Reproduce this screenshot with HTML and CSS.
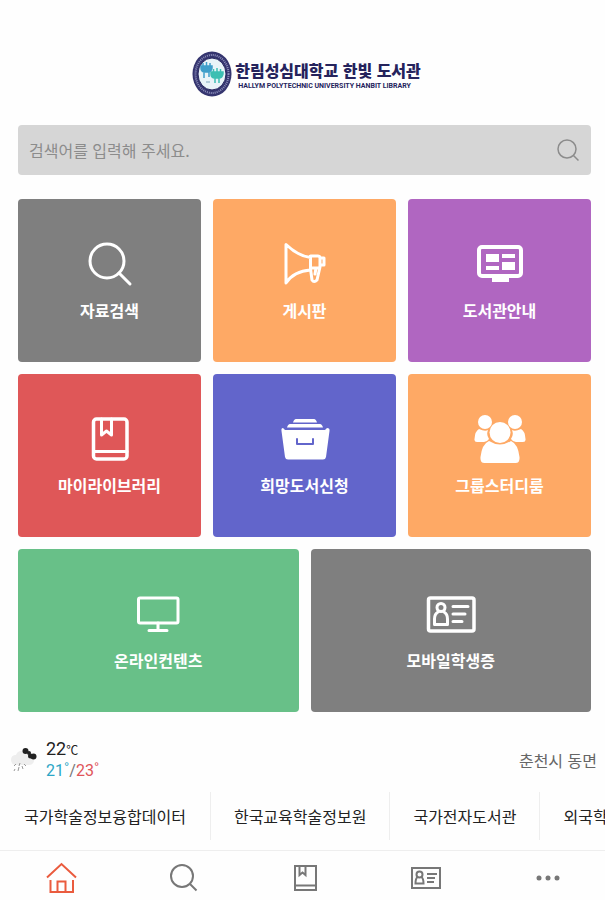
FILE: index.html
```html
<!DOCTYPE html>
<html lang="ko">
<head>
<meta charset="utf-8">
<meta name="viewport" content="width=device-width, initial-scale=1">
<title>한림성심대학교 한빛 도서관</title>
<link rel="stylesheet" href="styles.css">
</head>
<body>
<header class="brand">
  <svg class="emblem" viewBox="0 0 40 46" aria-hidden="true">
    <ellipse cx="20" cy="23" rx="19.5" ry="22.5" fill="#35356f"/>
    <ellipse cx="20" cy="23" rx="16.5" ry="19" fill="none" stroke="#8f91bd" stroke-width="2" stroke-dasharray="1 1"/>
    <ellipse cx="20" cy="23" rx="14" ry="16" fill="#e9f4f8" stroke="#26265f"/>
    <path d="M9 15h11v2q-1 4-4 4h-3q-4 0-4-4zM14.500 11v4M11 12v3M18 12v3M12 21v6M17 21v5" fill="#3f9fca" stroke="#3f9fca" stroke-width="1.500"/>
    <path d="M19 21h12v2q-1 4-4 4h-4q-4 0-4-4zM25 17v4M21.500 18v3M28.500 18v3M23 27v5M27 27v5" fill="#3dbfb2" stroke="#3dbfb2" stroke-width="1.500"/>
    <path d="M14 31h4" stroke="#7fa6bd" stroke-width="1"/>
  </svg>
  <div class="brand-text">
    <h1 class="brand-name">한림성심대학교 한빛 도서관</h1>
    <p class="brand-sub">HALLYM POLYTECHNIC UNIVERSITY HANBIT LIBRARY</p>
  </div>
</header>

<main class="content">
  <form class="search" role="search">
    <input class="search-input" type="text" placeholder="검색어를 입력해 주세요." aria-label="검색어">
    <button class="search-button" type="button" aria-label="검색">
      <svg class="search-icon" viewBox="0 0 24 24"><circle cx="11" cy="11" r="9"/><path d="M17.500 17.500 22.500 22.500"/></svg>
    </button>
  </form>

  <nav class="tiles" aria-label="주요 메뉴">
    <a class="tile gray" href="#">
      <svg class="tile-icon" viewBox="0 0 48 48"><circle cx="21" cy="21" r="17"/><path d="M33 33 44 44"/></svg>
      <span>자료검색</span>
    </a>
    <a class="tile orange" href="#">
      <svg class="tile-icon" viewBox="0 0 48 48"><path d="M5 4.500V43Q13 31 29.500 30V17.500Q17 16 5 4.500zM29.500 16H37Q39 16 39 18V26Q39 28 37 28H30M39 18h4v7h-4M29.500 29l1.500 11q2 3 5 0l3-13M35 28l-1 6"/></svg>
      <span>게시판</span>
    </a>
    <a class="tile purple" href="#">
      <svg class="tile-icon" viewBox="0 0 48 48"><rect x="3" y="7" width="42" height="29" rx="3" stroke-width="4"/><path class="solid" d="M16 38h17v4H16zM10 14h13v8H10zM10 26h13v4H10zM26 14h13v4H26zM26 22h13v8H26z"/></svg>
      <span>도서관안내</span>
    </a>
    <a class="tile red" href="#">
      <svg class="tile-icon" viewBox="0 0 48 48"><rect x="7.500" y="4" width="33.500" height="40" rx="3" stroke-width="3.500"/><path d="M8 36.500h33M15.500 4v16l5-4 5 4V4"/></svg>
      <span>마이라이브러리</span>
    </a>
    <a class="tile blue" href="#">
      <svg class="tile-icon" viewBox="0 0 48 48"><path class="solid" d="M15 4h18q2 0 3 3.500H12q1-3.500 3-3.500zM9 9h30q2 0 3 3.500H6Q7 9 9 9zM2 13l2 2h40l2-2q3 0 2.500 3l-3.500 26q-.5 2.500-3 2.500H7Q4.500 44.500 4 42L.5 16Q0 13 2 13z"/><path class="handle" d="M16 24v5h16v-5"/></svg>
      <span>희망도서신청</span>
    </a>
    <a class="tile orange" href="#">
      <svg class="tile-icon" viewBox="0 0 48 48"><g class="solid"><circle cx="9" cy="7" r="7"/><circle cx="39" cy="7" r="7"/><circle cx="24" cy="17.500" r="10.500"/><path d="M3 14q6 3 9 1-2 5 1 9-2 3-5 3H1q-3 0-2.500-3Q-1 16 3 14zM45 14q-6 3-9 1 2 5-1 9 2 3 5 3h7q3 0 2.500-3Q49 16 45 14zM13 26q11 7 22 0 7 3 8.500 16 .5 6-4 6h-31q-4.500 0-4-6Q6 29 13 26z"/></g></svg>
      <span>그룹스터디룸</span>
    </a>
    <a class="tile wide green" href="#">
      <svg class="tile-icon" viewBox="0 0 48 48"><rect x="4.500" y="8" width="39.500" height="25" rx="1.500"/><path d="M24 33v7M15 40.500h18"/></svg>
      <span>온라인컨텐츠</span>
    </a>
    <a class="tile wide gray" href="#">
      <svg class="tile-icon" viewBox="0 0 48 48"><rect x="1.500" y="8" width="45.500" height="33" rx="2" stroke-width="3.500"/><circle cx="14" cy="17.500" r="4"/><path d="M11 22q-3.500 2-3.500 7v5.500h13V29q0-5-3.500-7M26 16.500h15M26 24h12M26 31.500h9"/></svg>
      <span>모바일학생증</span>
    </a>
  </nav>
</main>

<section class="weather" aria-label="날씨">
  <svg class="weather-icon" viewBox="0 0 28 28" aria-hidden="true">
    <path d="M1 14q0-5 5-5 2-5 8-4 3 1 5 5 5 1 5 5-1 4-5 4H5q-4-1-4-5z" fill="#eee"/>
    <g fill="#222"><circle cx="15.500" cy="5" r="3"/><circle cx="19" cy="7" r="2"/><circle cx="20.500" cy="10" r="2.500"/><circle cx="23.500" cy="10.500" r="3"/></g>
    <path d="M6 18l-2 2M10 17l-1 3M14 18l2 2M5 23l-1 2M9 21l-1 4M12 20l1 3" stroke="#999" stroke-width="1"/>
  </svg>
  <div class="temps">
    <p class="now">22<span class="unit">℃</span></p>
    <p class="range"><span class="low">21˚</span>/<span class="high">23˚</span></p>
  </div>
  <p class="place">춘천시 동면</p>
</section>

<nav class="links" aria-label="관련 사이트">
  <a href="#">국가학술정보융합데이터</a>
  <a href="#">한국교육학술정보원</a>
  <a href="#">국가전자도서관</a>
  <a href="#">외국학</a>
</nav>

<nav class="tabbar" aria-label="하단 메뉴">
  <a class="tab active" href="#" aria-label="홈"><svg viewBox="0 0 32 32"><path d="M2 15.500 16.500 2 31 15.500M5.500 18v12H28V18M12.500 30V19.500h8V30"/></svg></a>
  <a class="tab" href="#" aria-label="검색"><svg viewBox="0 0 32 32"><circle cx="15" cy="14" r="11"/><path d="M23 22l6.500 6.500"/></svg></a>
  <a class="tab" href="#" aria-label="도서"><svg viewBox="0 0 32 32"><path d="M6 4h21v24H6zM6 23.500h21M10.500 4v9l3-2.500 3 2.500V4"/></svg></a>
  <a class="tab" href="#" aria-label="학생증"><svg viewBox="0 0 32 32"><path d="M2 6h28v20H2zM17 12h10M17 16h8M17 20h7M7.500 15q-2 1.500-2 6.500h8q0-5-2-6.500"/><circle cx="9.500" cy="12.500" r="3"/></svg></a>
  <a class="tab" href="#" aria-label="더보기"><svg viewBox="0 0 32 32"><g class="dots"><circle cx="7" cy="16" r="2.500"/><circle cx="16" cy="16" r="2.500"/><circle cx="25" cy="16" r="2.500"/></g></svg></a>
</nav>
</body>
</html>
```
FILE: styles.css
```css
* {
  box-sizing: border-box;
}

body {
  margin: 0;
  min-height: 100vh;
  display: flex;
  flex-direction: column;
  overflow-x: hidden;
  background: #fefefe;
  color: #222;
  font: 16px/24px "Noto Sans CJK KR", "Noto Sans", sans-serif;
}

h1,
p {
  margin: 0;
}

a {
  color: inherit;
  text-decoration: none;
}

svg {
  display: block;
  overflow: visible;
}

.brand {
  display: flex;
  justify-content: center;
  align-items: center;
  gap: 3px;
  padding: 51px 0 28px 8px;
}

.emblem {
  width: 40px;
  height: 46px;
}

.brand-text {
  color: #25235c;
}

.brand-name {
  font-size: 16px;
  line-height: 24px;
  font-weight: 900;
}

.brand-sub {
  font: 700 7px/8px Roboto, "Liberation Sans", sans-serif;
  padding-left: 3px;
}

.content {
  padding: 0 14px 0 18px;
}

.search {
  display: flex;
  align-items: center;
  height: 50px;
  margin-bottom: 24px;
  padding: 0 11px;
  border-radius: 4px;
  background: #d6d6d6;
}

.search-input {
  flex: 1;
  min-width: 0;
  padding: 0;
  border: 0;
  outline: 0;
  background: none;
  font: inherit;
  color: #555;
}

.search-input::placeholder {
  color: #8c8c8c;
  opacity: 1;
}

.search-button {
  padding: 0;
  border: 0;
  background: none;
}

.search-icon {
  width: 24px;
  height: 24px;
  fill: none;
  stroke: #8c8c8c;
  stroke-width: 1.5;
}

.tiles {
  display: grid;
  grid-template-columns: repeat(6, 1fr);
  grid-auto-rows: 163px;
  gap: 12px;
}

.tile {
  grid-column: span 2;
  display: flex;
  flex-direction: column;
  align-items: center;
  justify-content: center;
  gap: 10px;
  border-radius: 4px;
  color: #fff;
  font-weight: 700;
}

.wide {
  grid-column: span 3;
}

.gray { background: #7f7f7f; }
.orange { background: #fea965; }
.purple { background: #b066c1; }
.red { background: #df5758; }
.blue { background: #6265cb; }
.green { background: #68c088; }

.tile-icon {
  width: 48px;
  height: 48px;
  fill: none;
  stroke: #fff;
  stroke-width: 3;
  stroke-linecap: round;
  stroke-linejoin: round;
}

.solid {
  fill: #fff;
  stroke: none;
}

.handle {
  stroke: #6265cb;
  stroke-width: 2;
}

.weather {
  display: flex;
  align-items: center;
  gap: 8px;
  padding: 26px 8px 10px 10px;
}

.weather-icon {
  width: 28px;
  height: 28px;
}

.temps {
  font-family: Roboto, "Noto Sans CJK KR", sans-serif;
}

.now {
  font-size: 18px;
  line-height: 22px;
}

.unit {
  font-size: 12px;
  line-height: 12px;
}

.range {
  line-height: 22px;
  color: #777;
}

.low { color: #2ba6c6; }
.high { color: #e0555a; }

.place {
  margin-left: auto;
  color: #666;
}

.links {
  display: flex;
  overflow: hidden;
  white-space: nowrap;
}

.links a {
  flex: none;
  padding: 12px 24px;
}

.links a + a {
  padding: 12px 23px;
  border-left: 1px solid #eee;
}

.tabbar {
  display: flex;
  justify-content: space-between;
  align-items: center;
  height: 50px;
  margin-top: auto;
  padding: 4px 41px 0 45px;
  border-top: 1px solid #eee;
}

.tab svg {
  width: 32px;
  height: 32px;
  fill: none;
  stroke: #777;
  stroke-width: 2;
}

.active svg {
  stroke: #ea5b3e;
}

.tab .dots {
  fill: #777;
  stroke: none;
}
```
